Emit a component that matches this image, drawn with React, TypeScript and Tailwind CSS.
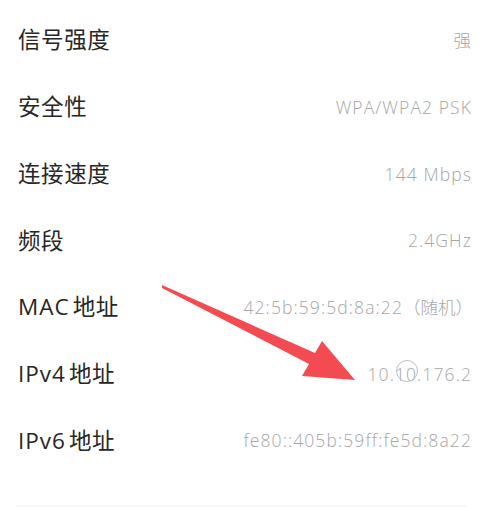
const rows: { label: string; prefix?: string; value: string; suffix?: string }[] = [
  { label: '信号强度', value: '强' },
  { label: '安全性', value: 'WPA/WPA2 PSK' },
  { label: '连接速度', value: '144 Mbps' },
  { label: '频段', value: '2.4GHz' },
  { prefix: 'MAC', label: '地址', value: '42:5b:59:5d:8a:22', suffix: '（随机）' },
  { prefix: 'IPv4', label: '地址', value: '10.10.176.2' },
  { prefix: 'IPv6', label: '地址', value: 'fe80::405b:59ff:fe5d:8a22' },
];

export default function App() {
  return (
    <div className="relative w-[500px] h-[529px] bg-white overflow-hidden font-['Open_Sans','Noto_Sans_CJK_SC',sans-serif]">
      <div className="pt-[7px] pl-[18px] pr-[28px]">
        {rows.map((row) => (
          <div key={row.value} className="h-[66.7px] flex items-center justify-between">
            <span className="text-[22.5px] text-[#262626] tracking-[0.6px] whitespace-nowrap">
              {row.prefix && <span className="mr-[3px] tracking-[1px]">{row.prefix}</span>}
              {row.label}
            </span>
            <span className="text-[17.5px] text-[#a6a6a6] font-light tracking-[1.1px] whitespace-nowrap">
              {row.value}
              {row.suffix && <span className="tracking-normal -mr-[1px]">{row.suffix}</span>}
            </span>
          </div>
        ))}
      </div>
      <div className="mt-[31px] mx-[16px] w-[450px] h-[2px] bg-[#f6f6f6]" />

      {/* touch indicator */}
      <div className="absolute left-[396px] top-[360px] w-[22px] h-[22px] rounded-full border border-[#b9c0d6]" />

      {/* annotation arrow */}
      <svg className="absolute left-0 top-0 pointer-events-none" width="500" height="529" viewBox="0 0 500 529">
        <polygon
          points="162,285 315,353 322,341 355,380 302,376 309,364 162,288"
          fill="#f44b53"
        />
      </svg>
    </div>
  );
}
